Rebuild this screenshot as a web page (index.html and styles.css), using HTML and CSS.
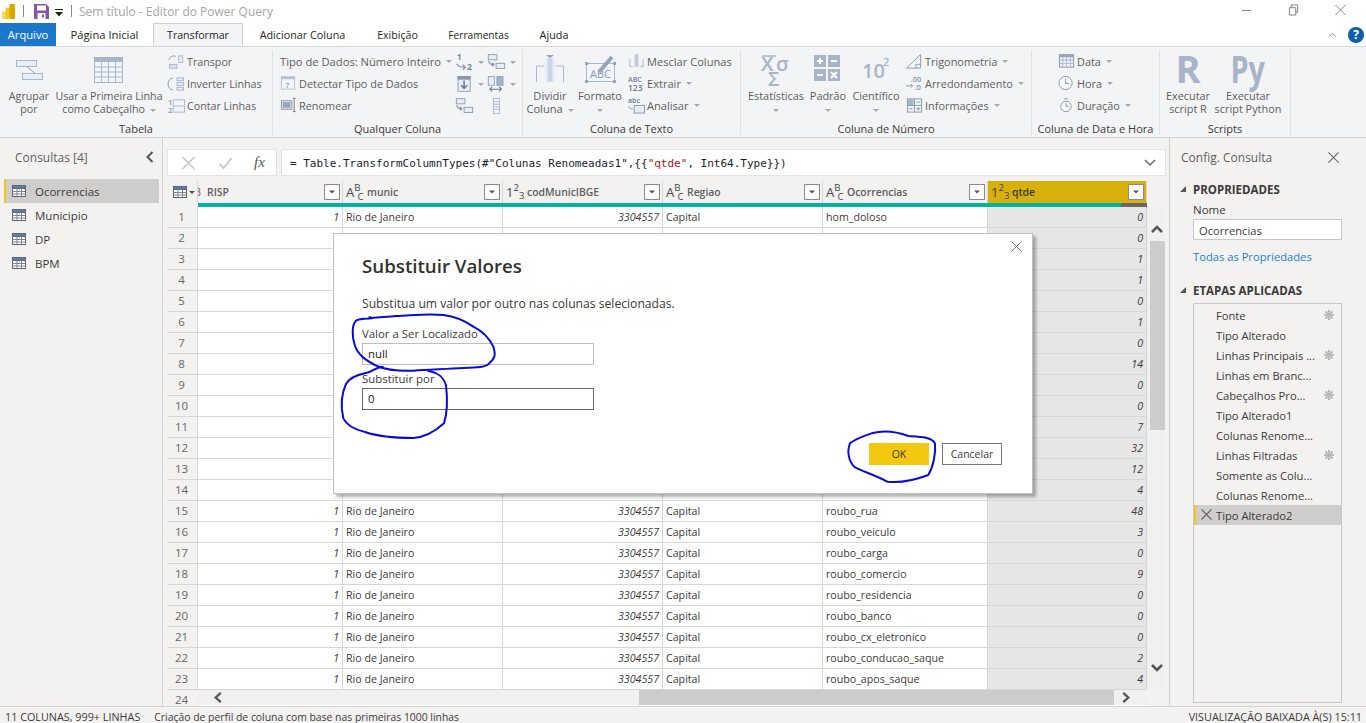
FILE: index.html
```html
<!DOCTYPE html>
<html lang="pt-BR">
<head>
<meta charset="utf-8">
<title>Sem título - Editor do Power Query</title>
<link rel="stylesheet" href="styles.css">
</head>
<body>
<svg class="defs" width="0" height="0" aria-hidden="true">
  <symbol id="tbl" viewBox="0 0 14 12"><rect x="0.5" y="0.5" width="13" height="11" fill="#fff" stroke="#5f6672"/><rect x="0.5" y="0.5" width="13" height="3" fill="#5b7fb0" stroke="#5f6672"/><path d="M5 3.5v8M9.500 3.500v8M.5 6.500h13M.5 9h13" stroke="#7d8590" fill="none"/></symbol>
  <symbol id="gear" viewBox="0 0 12 12"><path d="M6 1v2M6 9v2M1 6h2M9 6h2M2.500 2.500l1.500 1.500M8 8l1.500 1.500M9.500 2.500L8 4M4 8L2.500 9.500" stroke="#b5b5b5" stroke-width="2" fill="none"/><circle cx="6" cy="6" r="2.800" fill="#b5b5b5"/></symbol>
  <symbol id="filt" viewBox="0 0 16 16"><rect x="0.500" y="0.500" width="15" height="15" fill="#fff" stroke="#8a8a8a"/><path d="M5 6.500h6l-3 3z" fill="#555"/></symbol>
</svg>

<div class="app">
  <header class="titlebar">
    <svg class="logo" viewBox="0 0 16 18"><rect x="1" y="10" width="6" height="8" fill="#f6d860"/><rect x="5" y="6" width="5" height="12" fill="#f2c811"/><rect x="9" y="2" width="6" height="16" rx="1" fill="#d9a800"/></svg>
    <i class="tsep"></i>
    <svg class="save" viewBox="0 0 15 15"><path d="M0 0h12l3 3v12H0z" fill="#8a55a8"/><rect x="3" y="1.500" width="9" height="5" fill="#fff"/><rect x="3.500" y="9" width="8" height="6" fill="#fff"/><rect x="8" y="10.500" width="2" height="3" fill="#8a55a8"/></svg>
    <svg class="qat" viewBox="0 0 8 8"><rect y="0" width="8" height="1" fill="#222"/><path d="M0 3h8L4 7.500z" fill="#222"/></svg>
    <i class="tsep tsep2"></i>
    <span class="doc-title">Sem título - Editor do Power Query</span>
    <div class="winctl">
      <svg viewBox="0 0 12 12"><path d="M1 6.500h10" stroke="#777"/></svg>
      <svg viewBox="0 0 12 12"><path d="M1.500 3.500h7v8h-7zM3.500 3.500v-3h7v8h-2" fill="none" stroke="#777"/></svg>
      <svg viewBox="0 0 12 12"><path d="M.5.500l11 11M11.500.500l-11 11" stroke="#777" fill="none"/></svg>
    </div>
  </header>

  <nav class="tabs">
    <span class="tab file">Arquivo</span>
    <span class="tab t-pag">Página Inicial</span>
    <span class="tab on">Transformar</span>
    <span class="tab t-adi">Adicionar Coluna</span>
    <span class="tab t-exi">Exibição</span>
    <span class="tab t-fer">Ferramentas</span>
    <span class="tab t-aju">Ajuda</span>
    <div class="tabs-right">
      <svg class="collapse" viewBox="0 0 10 6"><path d="M1 5l4-4 4 4" fill="none" stroke="#888"/></svg>
      <span class="help">?</span>
    </div>
  </nav>

  <section class="ribbon">
    <div class="group g1">
      <div class="gbody">
        <div class="lg w-agr">
          <svg class="lgi" viewBox="0 0 32 30"><rect x="3.500" y="6.500" width="20" height="6" fill="#e8eef7" stroke="#a8b6d0"/><rect x="9.500" y="19.500" width="20" height="6" fill="#e8eef7" stroke="#a8b6d0"/><path d="M14 12.500l8 7" stroke="#999"/></svg>
          <span>Agrupar<br>por</span>
        </div>
        <div class="lg w-usar">
          <svg class="lgi" viewBox="0 0 32 30"><rect x="1.500" y="3.500" width="28" height="25" fill="#f2f5fa" stroke="#a8b6d0"/><rect x="1" y="3" width="29" height="5" fill="#a8b4c8"/><path d="M8.500 3v26M15.500 3v26M22.500 3v26M1.500 13h28M1.500 18h28M1.500 23h28" stroke="#a8b6d0" fill="none"/></svg>
          <span>Usar a Primeira Linha<br>como Cabeçalho <b class="dd"></b></span>
        </div>
        <div class="col c-trans">
          <div class="sm"><svg class="smi" viewBox="0 0 18 16"><path d="M1 6a5 5 0 0 1 7-4" fill="none" stroke="#8a96aa"/><rect x="11.500" y="1.500" width="4" height="7" fill="#e8eef7" stroke="#a8b6d0"/><rect x="1.500" y="10.500" width="8" height="4" fill="#d8e0ec" stroke="#a8b6d0"/></svg>Transpor</div>
          <div class="sm"><svg class="smi" viewBox="0 0 18 16"><path d="M5 2a5 6 0 0 0 0 12" fill="none" stroke="#8a96aa"/><rect x="9.500" y="1.500" width="7" height="3" fill="#e8eef7" stroke="#a8b6d0"/><rect x="9.500" y="6.500" width="7" height="3" fill="#e8eef7" stroke="#a8b6d0"/><rect x="9.500" y="11.500" width="7" height="3" fill="#e8eef7" stroke="#a8b6d0"/></svg>Inverter Linhas</div>
          <div class="sm"><svg class="smi" viewBox="0 0 18 16"><text x="0" y="7" class="svgt">1</text><text x="0" y="15" class="svgt">2</text><rect x="5.500" y="1.500" width="12" height="13" fill="#f2f5fa" stroke="#a8b6d0"/><path d="M5.500 8h12" stroke="#a8b6d0"/></svg>Contar Linhas</div>
        </div>
      </div>
      <div class="glabel">Tabela</div>
    </div>

    <div class="group g2">
      <div class="gbody">
        <div class="col c-any">
          <div class="sm first">Tipo de Dados: Número Inteiro <b class="dd"></b></div>
          <div class="sm"><svg class="smi" viewBox="0 0 18 16"><rect x="1.500" y="1.500" width="14" height="13" fill="#f2f5fa" stroke="#b5c0d4"/><rect x="1" y="1" width="15" height="3" fill="#b5c0d4"/><text x="6" y="13" class="svgt">?</text></svg>Detectar Tipo de Dados</div>
          <div class="sm"><svg class="smi" viewBox="0 0 18 16"><rect x="1.500" y="3.500" width="11" height="9" fill="#dfe5ef" stroke="#8a96aa"/><rect x="3" y="5" width="8" height="6" fill="#98a4b8"/><path d="M15 1v14M13.500 1h3M13.500 15h3" stroke="#777" fill="none"/></svg>Renomear</div>
        </div>
        <div class="icongrid">
          <div class="ig"><svg viewBox="0 0 22 20"><text x="2" y="8" class="svgt b">1</text><text x="14" y="19" class="svgt b">2</text><path d="M2 12c2 4 5 4 10 4M9 13l3 3-3 3" stroke="#8a96aa" stroke-width="1.500" fill="none"/></svg><b class="dd"></b></div>
          <div class="ig"><svg viewBox="0 0 22 20"><rect x="1.500" y="1.500" width="10" height="6" fill="#e8eef7" stroke="#8a96aa"/><rect x="10.500" y="11.500" width="10" height="6" fill="#e8eef7" stroke="#8a96aa"/><path d="M2 9c1 4 3 4 6 4M6 11l2 2-2 2" stroke="#8a96aa" fill="none" stroke-width="1.500"/></svg><b class="dd"></b></div>
          <div class="ig"><svg viewBox="0 0 22 20"><rect x="3.500" y="1.500" width="14" height="17" fill="#e8eef7" stroke="#8a96aa"/><rect x="3" y="1" width="15" height="4" fill="#8a96aa"/><path d="M10.500 6v9M7 11.500l3.500 3.500 3.500-3.500" stroke="#6d7b92" stroke-width="1.800" fill="none"/></svg><b class="dd"></b></div>
          <div class="ig"><svg viewBox="0 0 22 20"><rect x="1.500" y="1.500" width="7" height="10" fill="#e8eef7" stroke="#8a96aa"/><rect x="11.500" y="1.500" width="7" height="10" fill="#a8b4c8" stroke="#8a96aa"/><path d="M3 16h14M3 16l3-2.500M3 16l3 2.500M17 16l-3-2.500M17 16l-3 2.500" stroke="#6d7b92" stroke-width="1.200" fill="none"/></svg><b class="dd"></b></div>
          <div class="ig"><svg viewBox="0 0 22 20"><rect x="1.500" y="1.500" width="10" height="6" fill="#e8eef7" stroke="#8a96aa"/><rect x="10.500" y="11.500" width="10" height="6" fill="#e8eef7" stroke="#8a96aa"/><path d="M2 9c1 4 3 4 6 4M6 11l2 2-2 2" stroke="#8a96aa" fill="none" stroke-width="1.500"/></svg></div>
          <div class="ig"><svg viewBox="0 0 22 20"><rect x="7.500" y="1.500" width="7" height="17" fill="#f2f5fa" stroke="#a8b6d0"/><path d="M7.500 5h7M7.500 8h7M7.500 11h7M7.500 14h7" stroke="#a8b6d0"/></svg></div>
        </div>
      </div>
      <div class="glabel">Qualquer Coluna</div>
    </div>

    <div class="group g3">
      <div class="gbody">
        <div class="lg w-div">
          <svg class="lgi" viewBox="0 0 32 30"><path d="M2.500 28v-16h8M29.500 28v-16h-8" fill="none" stroke="#a8b6d0"/><rect x="11" y="4" width="10" height="24" fill="#e8eef7"/><rect x="13.500" y="4" width="5" height="24" fill="#cbd6e6"/><path d="M12 1h8l-4 3z" fill="#a0a0a0"/></svg>
          <span>Dividir<br>Coluna <b class="dd"></b></span>
        </div>
        <div class="lg w-for">
          <svg class="lgi" viewBox="0 0 32 30"><rect x="2.500" y="9.500" width="28" height="18" fill="#f2f5fa" stroke="#a8b6d0"/><rect x="1" y="8" width="3" height="3" fill="#98a4b8"/><rect x="29" y="8" width="3" height="3" fill="#98a4b8"/><rect x="1" y="26" width="3" height="3" fill="#98a4b8"/><rect x="29" y="26" width="3" height="3" fill="#98a4b8"/><text x="6" y="24" class="svgt abc">ABC</text><path d="M15 18L28 3" stroke="#98a4b8" stroke-width="4"/></svg>
          <span>Formato<br><b class="dd dd2"></b></span>
        </div>
        <div class="col c-text">
          <div class="sm"><svg class="smi" viewBox="0 0 18 16"><path d="M2 6v8h3M16 6v8h-3" fill="none" stroke="#a8b6d0"/><rect x="7" y="1" width="4" height="13" fill="#c3cad6"/></svg>Mesclar Colunas</div>
          <div class="sm"><svg class="smi tight" viewBox="0 0 18 18"><text x="0" y="8" class="svgt abc2">ABC</text><text x="0" y="17" class="svgt abc3">123</text></svg>Extrair <b class="dd"></b></div>
          <div class="sm"><svg class="smi tight" viewBox="0 0 18 18"><text x="0" y="7" class="svgt abc2">abc</text><rect x="6.500" y="9.500" width="11" height="8" fill="#e8eef7" stroke="#8a96aa"/><path d="M1 10c0 3 2 3 4 3" stroke="#8a96aa" fill="none"/></svg>Analisar <b class="dd"></b></div>
        </div>
      </div>
      <div class="glabel">Coluna de Texto</div>
    </div>

    <div class="group g4">
      <div class="gbody">
        <div class="lg w-est">
          <svg class="lgi" viewBox="0 0 32 30"><path d="M2 2h14" stroke="#a8b4c8" stroke-width="1.500"/><text x="1" y="17" class="svgt big">X</text><text x="16" y="17" class="svgt big">σ</text><text x="8" y="32" class="svgt big">Σ</text></svg>
          <span>Estatísticas<br><b class="dd dd2"></b></span>
        </div>
        <div class="lg w-pad">
          <svg class="lgi" viewBox="0 0 32 30"><rect x="2" y="1" width="12" height="12" fill="#a8b4c8"/><rect x="16" y="1" width="12" height="12" fill="#a8b4c8"/><rect x="2" y="15" width="12" height="12" fill="#a8b4c8"/><rect x="16" y="15" width="12" height="12" fill="#a8b4c8"/><path d="M5 7h6M8 4v6M19 7h6M5 21h6M19 18l6 6M25 18l-6 6" stroke="#fff" stroke-width="2"/></svg>
          <span>Padrão<br><b class="dd dd2"></b></span>
        </div>
        <div class="lg w-cie">
          <svg class="lgi" viewBox="0 0 32 30"><text x="2" y="24" class="svgt big2">10</text><text x="23" y="12" class="svgt mid">2</text></svg>
          <span>Científico<br><b class="dd dd2"></b></span>
        </div>
        <div class="col c-num">
          <div class="sm"><svg class="smi" viewBox="0 0 18 16"><path d="M.5 15.500L15.500 1v14.500z" fill="#f2f5fa" stroke="#8a96aa"/><path d="M10.500 15.500v-4h5" fill="none" stroke="#8a96aa"/></svg>Trigonometria <b class="dd"></b></div>
          <div class="sm"><svg class="smi" viewBox="0 0 18 16"><text x="5" y="7" class="svgt">.00</text><text x="9" y="15" class="svgt">.0</text><path d="M0 11h7M5 9l2 2-2 2" stroke="#8a96aa" fill="none"/></svg>Arredondamento <b class="dd"></b></div>
          <div class="sm"><svg class="smi" viewBox="0 0 18 16"><rect x="1.500" y="1.500" width="15" height="14" fill="#f2f5fa" stroke="#8a96aa"/><rect x="2" y="2" width="6" height="6" fill="#a8b4c8"/><path d="M9 1.500v14M1.500 8.500h15M11 5h4M11 12h4M13 10v4M3 12h4" stroke="#8a96aa"/></svg>Informações <b class="dd"></b></div>
        </div>
      </div>
      <div class="glabel">Coluna de Número</div>
    </div>

    <div class="group g5">
      <div class="gbody">
        <div class="col c-date">
          <div class="sm"><svg class="smi" viewBox="0 0 18 16"><rect x="1.500" y="1.500" width="15" height="13" fill="#f2f5fa" stroke="#8a96aa"/><rect x="1" y="1" width="16" height="3" fill="#98a4b8"/><path d="M5 4v10M9 4v10M13 4v10M2 7h14M2 10.500h14" stroke="#a8b6d0"/></svg>Data <b class="dd"></b></div>
          <div class="sm"><svg class="smi" viewBox="0 0 18 16"><circle cx="8" cy="8" r="7" fill="#f6f8fb" stroke="#8a96aa"/><path d="M8 3v5.500h3.500" fill="none" stroke="#8a96aa"/></svg>Hora <b class="dd"></b></div>
          <div class="sm"><svg class="smi" viewBox="0 0 18 16"><circle cx="8.500" cy="9.500" r="5.500" fill="#f6f8fb" stroke="#8a96aa"/><path d="M8.500 6v3.500h3M6.500 1.500h4" fill="none" stroke="#8a96aa"/></svg>Duração <b class="dd"></b></div>
        </div>
      </div>
      <div class="glabel">Coluna de Data e Hora</div>
    </div>

    <div class="group g6">
      <div class="gbody">
        <div class="lg w-r">
          <span class="biglet">R</span>
          <span>Executar<br>script R</span>
        </div>
        <div class="lg w-py">
          <span class="biglet py">Py</span>
          <span>Executar<br>script Python</span>
        </div>
      </div>
      <div class="glabel">Scripts</div>
    </div>
  </section>

  <main class="main">
    <aside class="queries">
      <div class="q-head"><span>Consultas [4]</span><svg class="q-chev" viewBox="0 0 8 12"><path d="M6.500 1l-5 5 5 5" fill="none" stroke="#555" stroke-width="2"/></svg></div>
      <div class="q-item on"><svg class="ti"><use href="#tbl"/></svg>Ocorrencias</div>
      <div class="q-item"><svg class="ti"><use href="#tbl"/></svg>Municipio</div>
      <div class="q-item"><svg class="ti"><use href="#tbl"/></svg>DP</div>
      <div class="q-item"><svg class="ti"><use href="#tbl"/></svg>BPM</div>
    </aside>

    <div class="center">
      <div class="fbar">
        <div class="fbtns">
          <svg viewBox="0 0 14 14"><path d="M1 1l12 12M13 1L1 13" stroke="#c8c8c8" stroke-width="1.600"/></svg>
          <svg viewBox="0 0 14 14"><path d="M1 8l4 4 8-10" fill="none" stroke="#c8c8c8" stroke-width="2"/></svg>
          <span class="fx">fx</span>
        </div>
        <div class="finput"><code>= Table.TransformColumnTypes(#"Colunas Renomeadas1",{{<span class="str">"qtde"</span>, Int64.Type}})</code>
          <svg class="fchev" viewBox="0 0 12 8"><path d="M1 1l5 5 5-5" fill="none" stroke="#666" stroke-width="1.500"/></svg>
        </div>
      </div>

      <div class="gridwrap">
        <div class="grid">
          <div class="row head">
            <div class="hc corner"><svg class="ti2"><use href="#tbl"/></svg><b class="dd dark"></b></div>
            <div class="hc"><span class="clip3">3</span><span class="hname">RISP</span><svg class="filt"><use href="#filt"/></svg></div>
            <div class="hc"><span class="ty ab">A<sup>B</sup><sub>C</sub></span><span class="hname">munic</span><svg class="filt"><use href="#filt"/></svg></div>
            <div class="hc"><span class="ty">1<sup>2</sup><sub>3</sub></span><span class="hname">codMunicIBGE</span><svg class="filt"><use href="#filt"/></svg></div>
            <div class="hc"><span class="ty ab">A<sup>B</sup><sub>C</sub></span><span class="hname">Regiao</span><svg class="filt"><use href="#filt"/></svg></div>
            <div class="hc"><span class="ty ab">A<sup>B</sup><sub>C</sub></span><span class="hname">Ocorrencias</span><svg class="filt"><use href="#filt"/></svg></div>
            <div class="hc sel"><span class="ty">1<sup>2</sup><sub>3</sub></span><span class="hname">qtde</span><svg class="filt"><use href="#filt"/></svg></div>
          </div>
          <div class="row quality">
            <i class="qc0"></i><i class="qc"></i><i class="qc"></i><i class="qc"></i><i class="qc"></i><i class="qc"></i><i class="qc last"><em></em></i>
          </div>
          <div class="row"><div class="n">1</div><div class="r">1</div><div>Rio de Janeiro</div><div class="r">3304557</div><div>Capital</div><div>hom_doloso</div><div class="r sel">0</div></div>
          <div class="row"><div class="n">2</div><div></div><div></div><div></div><div></div><div></div><div class="r sel">0</div></div>
          <div class="row"><div class="n">3</div><div></div><div></div><div></div><div></div><div></div><div class="r sel">1</div></div>
          <div class="row"><div class="n">4</div><div></div><div></div><div></div><div></div><div></div><div class="r sel">1</div></div>
          <div class="row"><div class="n">5</div><div></div><div></div><div></div><div></div><div></div><div class="r sel">0</div></div>
          <div class="row"><div class="n">6</div><div></div><div></div><div></div><div></div><div></div><div class="r sel">1</div></div>
          <div class="row"><div class="n">7</div><div></div><div></div><div></div><div></div><div></div><div class="r sel">0</div></div>
          <div class="row"><div class="n">8</div><div></div><div></div><div></div><div></div><div></div><div class="r sel">14</div></div>
          <div class="row"><div class="n">9</div><div></div><div></div><div></div><div></div><div></div><div class="r sel">0</div></div>
          <div class="row"><div class="n">10</div><div></div><div></div><div></div><div></div><div></div><div class="r sel">0</div></div>
          <div class="row"><div class="n">11</div><div></div><div></div><div></div><div></div><div></div><div class="r sel">7</div></div>
          <div class="row"><div class="n">12</div><div></div><div></div><div></div><div></div><div></div><div class="r sel">32</div></div>
          <div class="row"><div class="n">13</div><div></div><div></div><div></div><div></div><div></div><div class="r sel">12</div></div>
          <div class="row"><div class="n">14</div><div></div><div></div><div></div><div></div><div></div><div class="r sel">4</div></div>
          <div class="row"><div class="n">15</div><div class="r">1</div><div>Rio de Janeiro</div><div class="r">3304557</div><div>Capital</div><div>roubo_rua</div><div class="r sel">48</div></div>
          <div class="row"><div class="n">16</div><div class="r">1</div><div>Rio de Janeiro</div><div class="r">3304557</div><div>Capital</div><div>roubo_veiculo</div><div class="r sel">3</div></div>
          <div class="row"><div class="n">17</div><div class="r">1</div><div>Rio de Janeiro</div><div class="r">3304557</div><div>Capital</div><div>roubo_carga</div><div class="r sel">0</div></div>
          <div class="row"><div class="n">18</div><div class="r">1</div><div>Rio de Janeiro</div><div class="r">3304557</div><div>Capital</div><div>roubo_comercio</div><div class="r sel">9</div></div>
          <div class="row"><div class="n">19</div><div class="r">1</div><div>Rio de Janeiro</div><div class="r">3304557</div><div>Capital</div><div>roubo_residencia</div><div class="r sel">0</div></div>
          <div class="row"><div class="n">20</div><div class="r">1</div><div>Rio de Janeiro</div><div class="r">3304557</div><div>Capital</div><div>roubo_banco</div><div class="r sel">0</div></div>
          <div class="row"><div class="n">21</div><div class="r">1</div><div>Rio de Janeiro</div><div class="r">3304557</div><div>Capital</div><div>roubo_cx_eletronico</div><div class="r sel">0</div></div>
          <div class="row"><div class="n">22</div><div class="r">1</div><div>Rio de Janeiro</div><div class="r">3304557</div><div>Capital</div><div>roubo_conducao_saque</div><div class="r sel">2</div></div>
          <div class="row"><div class="n">23</div><div class="r">1</div><div>Rio de Janeiro</div><div class="r">3304557</div><div>Capital</div><div>roubo_apos_saque</div><div class="r sel">4</div></div>
          <div class="row"><div class="n">24</div></div>
          <div class="hscroll">
            <svg class="harrow" viewBox="0 0 10 12"><path d="M8 1L2.500 6 8 11" fill="none" stroke="#555" stroke-width="2.500"/></svg>
            <div class="hthumb"></div>
            <svg class="harrow right" viewBox="0 0 10 12"><path d="M2 1l5.500 5L2 11" fill="none" stroke="#555" stroke-width="2.500"/></svg>
          </div>
        </div>
        <div class="vscroll">
          <svg class="varrow" viewBox="0 0 12 10"><path d="M1 8l5-5 5 5" fill="none" stroke="#555" stroke-width="2.500"/></svg>
          <div class="vthumb"></div>
          <svg class="varrow down" viewBox="0 0 12 10"><path d="M1 2l5 5 5-5" fill="none" stroke="#555" stroke-width="2.500"/></svg>
        </div>
      </div>
    </div>

    <aside class="settings">
      <div class="s-head"><span>Config. Consulta</span><svg class="s-x" viewBox="0 0 12 12"><path d="M.5.500l11 11M11.500.500l-11 11" stroke="#666" stroke-width="1.200"/></svg></div>
      <div class="s-sec"><b class="tri"></b>PROPRIEDADES</div>
      <div class="s-label">Nome</div>
      <div class="s-input">Ocorrencias</div>
      <div class="s-link">Todas as Propriedades</div>
      <div class="s-sec s-sec2"><b class="tri"></b>ETAPAS APLICADAS</div>
      <div class="steps">
        <div class="step"><span>Fonte</span><svg class="gear"><use href="#gear"/></svg></div>
        <div class="step"><span>Tipo Alterado</span></div>
        <div class="step"><span>Linhas Principais ...</span><svg class="gear"><use href="#gear"/></svg></div>
        <div class="step"><span>Linhas em Branc...</span></div>
        <div class="step"><span>Cabeçalhos Pro...</span><svg class="gear"><use href="#gear"/></svg></div>
        <div class="step"><span>Tipo Alterado1</span></div>
        <div class="step"><span>Colunas Renome...</span></div>
        <div class="step"><span>Linhas Filtradas</span><svg class="gear"><use href="#gear"/></svg></div>
        <div class="step"><span>Somente as Colu...</span></div>
        <div class="step"><span>Colunas Renome...</span></div>
        <div class="step on"><svg class="step-x" viewBox="0 0 11 11"><path d="M.5.500l10 10M10.500.500l-10 10" stroke="#666" stroke-width="1.200"/></svg><span>Tipo Alterado2</span></div>
      </div>
    </aside>
  </main>

  <footer class="status">
    <span class="st1">11 COLUNAS, 999+ LINHAS</span>
    <span class="st2">Criação de perfil de coluna com base nas primeiras 1000 linhas</span>
    <span class="st3">VISUALIZAÇÃO BAIXADA À(S) 15:11</span>
  </footer>

  <div class="dialog">
    <svg class="d-x" viewBox="0 0 12 12"><path d="M.5.500l11 11M11.500.500l-11 11" stroke="#666"/></svg>
    <h2>Substituir Valores</h2>
    <p class="d-desc">Substitua um valor por outro nas colunas selecionadas.</p>
    <label class="d-lab">Valor a Ser Localizado</label>
    <div class="d-input">null</div>
    <label class="d-lab l2">Substituir por</label>
    <div class="d-input act">0</div>
    <div class="d-btns"><span class="btn ok">OK</span><span class="btn">Cancelar</span></div>
  </div>

  <svg class="ink" viewBox="0 0 1366 723">
    <g transform="translate(330 230) scale(.3333)" fill="none" stroke="#0a0ad8" stroke-width="6" stroke-linecap="round" stroke-linejoin="round">
      <path d="M118 262C150 268 90 262 78 272C65 285 66 320 74 345C85 378 110 392 140 408C170 420 200 424 250 422C300 420 350 416 400 414C440 413 470 412 478 400C495 385 498 375 490 350C478 325 460 305 430 290C405 272 380 260 340 255C290 250 250 256 200 258C170 260 140 262 118 265"/>
      <path d="M158 410C135 412 125 428 105 430C85 434 60 442 48 462C35 490 32 530 40 565C52 590 80 600 105 606C140 618 190 624 250 624C290 622 320 600 342 580C352 550 352 500 348 465C340 440 325 428 295 423"/>
    </g>
    <g transform="translate(800 420) scale(.3333)" fill="none" stroke="#0a0ad8" stroke-width="6" stroke-linecap="round" stroke-linejoin="round">
      <path d="M150 70C140 95 146 125 165 142C190 155 225 165 262 185C300 190 345 180 385 165C400 140 408 100 405 70C395 50 360 50 325 48C290 35 250 30 215 40C190 48 165 58 150 70Z"/>
    </g>
  </svg>
</div>
</body>
</html>
```
FILE: styles.css
```css
* { box-sizing: border-box; }
html, body { margin: 0; padding: 0; height: 100%; overflow: hidden; }
body { font-family: "Open Sans", "Noto Sans", sans-serif; font-size: 11.2px; color: #3b3a39; background: #f3f2f1; }
.defs { position: absolute; }
.app { position: relative; width: 1366px; height: 723px; display: flex; flex-direction: column; overflow: hidden; }

/* title bar */
.titlebar { height: 23px; background: #fff; display: flex; align-items: center; padding-left: 1px; flex: none; }
.logo { width: 15px; height: 17px; margin-top: -3px; }
.tsep { width: 1px; height: 12px; background: #888; margin-left: 7px; margin-top: -1px; }
.save { width: 15px; height: 15px; margin-left: 10px; margin-top: -1px; }
.qat { width: 8px; height: 8px; margin-left: 6px; margin-top: 2px; }
.tsep2 { margin-left: 8px; }
.doc-title { margin-left: 7px; font-size: 12px; color: #a6a6a6; margin-top: -1px; }
.winctl { margin-left: auto; display: flex; gap: 36px; padding-right: 20px; margin-top: -3px; }
.winctl svg { width: 11px; height: 12px; }

/* tabs */
.tabs { height: 23px; background: #fff; display: flex; align-items: stretch; flex: none; }
.tab { line-height: 24px; font-size: 10.800px; color: #252423; white-space: nowrap; text-align: center; flex: none; }
.tab.file { width: 56px; background: #1a77c9; color: #fff; font-size: 11.200px; }
.t-pag { width: 97px; font-size: 11.200px; }
.tab.on { width: 90px; background: #f3f4f6; border: 1px solid #d0d0d0; border-bottom: 0; line-height: 23px; font-size: 10.600px; }
.t-adi { width: 119px; }
.t-exi { width: 71px; font-size: 10.600px; }
.t-fer { width: 91px; font-size: 10.200px; }
.t-aju { width: 60px; }
.tabs-right { margin-left: auto; display: flex; align-items: center; padding-right: 2px; gap: 11px; }
.collapse { width: 9px; height: 6px; }
.help { width: 16px; height: 16px; border-radius: 50%; background: #0f5ea8; color: #fff; font-weight: 700; font-size: 12px; text-align: center; line-height: 16px; }

/* ribbon */
.ribbon { height: 92px; background: #f3f4f6; border-top: 1px solid #d9d9d9; border-bottom: 1px solid #d6d6d6; display: flex; flex: none; color: #605e5c; font-size: 10.900px; }
.group { display: flex; flex-direction: column; border-right: 1px solid #e0e1e3; margin-top: 3px; margin-bottom: 2px; flex: none; }
.g1 { width: 273px; font-size: 10.700px; }
.g2 { width: 250px; }
.g3 { width: 218px; font-size: 11.100px; }
.g4 { width: 291px; }
.g5 { width: 128px; }
.g6 { width: 131px; }
.gbody { flex: 1; display: flex; min-height: 0; }
.glabel { height: 14px; line-height: 16px; text-align: center; font-size: 11px; color: #3b3a39; }
.lg { display: flex; flex-direction: column; align-items: center; text-align: center; line-height: 13px; white-space: nowrap; flex: none; }
.lg > span:last-child { margin-top: 5px; }
.g1 .lg > span:last-child { margin-top: 6px; }
.lgi { width: 32px; height: 30px; margin-top: 4px; display: block; overflow: visible; }
.w-agr { width: 46px; margin-left: 6px; }
.w-usar { width: 108px; margin-left: 3px; }
.w-div { width: 38px; margin-left: 8px; }
.w-for { width: 44px; margin-left: 9px; }
.w-est { width: 62px; margin-left: 4px; }
.w-pad { width: 40px; margin-left: 1px; }
.w-cie { width: 50px; margin-left: 3px; }
.w-r { width: 50px; margin-left: 3px; }
.w-py { width: 70px; margin-left: 0; }
.biglet { font-family: "Open Sans", sans-serif; font-size: 38px; font-weight: 700; color: #a8b4c8; line-height: 36px; height: 37px; }
.biglet.py { transform: scaleX(.76); }
.lg > .biglet + span { margin-top: 2px; }
.col { display: flex; flex-direction: column; }
.sm { height: 22px; display: flex; align-items: center; white-space: nowrap; gap: 0; }
.sm .dd { margin-left: 5px; }
.sm.first { font-size: 11.200px; }
.smi { width: 17px; height: 16px; margin-right: 2px; flex: none; overflow: visible; }
.smi.tight { height: 18px; }
.c-trans { margin-left: 5px; padding-top: 1px; }
.c-any { margin-left: 7px; width: 175px; }
.c-text { margin-left: 6px; }
.c-num { margin-left: 5px; }
.c-date { margin-left: 26px; }
.icongrid { display: grid; grid-template-columns: 32px 32px; grid-auto-rows: 22px; padding-top: 1px; }
.ig { display: flex; align-items: center; }
.ig svg { width: 19px; height: 18px; margin-right: 2px; overflow: visible; }
.dd { display: inline-block; width: 0; height: 0; border-left: 3.500px solid transparent; border-right: 3.500px solid transparent; border-top: 3.500px solid #a8a8a8; vertical-align: middle; margin-left: 2px; }
.dd2 { margin: 0; }
.dd.dark { border-top-color: #555; }
.svgt { font-family: "Open Sans", sans-serif; font-size: 8px; fill: #8a96aa; font-weight: 600; }
.svgt.b { font-size: 10px; fill: #7a88a0; font-weight: 700; }
.svgt.abc { font-size: 11px; font-weight: 400; }
.svgt.abc2 { font-size: 7.500px; fill: #6d7b92; }
.svgt.abc3 { font-size: 9px; fill: #6d7b92; }
.svgt.big { font-size: 20px; fill: #a8b4c8; }
.svgt.big2 { font-size: 20px; fill: #a8b4c8; }
.svgt.mid { font-size: 11px; fill: #a8b4c8; }

/* main */
.main { flex: 1; min-height: 0; display: flex; background: #f3f2f1; }
.queries { width: 163px; border-right: 1px solid #d0d0d0; padding: 8px 3px 0 4px; flex: none; }
.q-head { height: 22px; margin-bottom: 11px; display: flex; align-items: center; padding-left: 11px; font-size: 12px; color: #605e5c; justify-content: space-between; padding-right: 5px; }
.q-chev { width: 8px; height: 12px; }
.q-item { height: 24px; display: flex; align-items: center; padding-left: 8px; font-size: 11.500px; color: #3b3a39; }
.q-item.on { background: #cfcecd; border-left: 2px solid #f2c811; padding-left: 6px; }
.ti { width: 14px; height: 12px; margin-right: 9px; flex: none; }
.center { width: 1007px; padding: 11px 0 0 4px; flex: none; display: flex; flex-direction: column; min-height: 0; }
.fbar { height: 27px; display: flex; gap: 4px; padding-right: 4px; flex: none; }
.fbtns { width: 110px; background: #fff; border: 1px solid #e3e3e3; display: flex; align-items: center; gap: 22px; padding-left: 13px; }
.fbtns svg { width: 15px; height: 14px; }
.fx { font-family: "Liberation Serif", serif; font-style: italic; font-size: 15px; color: #555; margin-left: -1px; }
.finput { flex: 1; background: #fff; border: 1px solid #e3e3e3; display: flex; align-items: center; padding: 1px 9px 0 8px; justify-content: space-between; }
code { font-family: "DejaVu Sans Mono", "Liberation Mono", monospace; font-size: 11px; color: #1b1b2e; white-space: pre; }
.str { color: #a31515; }
.fchev { width: 12px; height: 8px; }
.gridwrap { margin-top: 5px; flex: 1; min-height: 0; display: flex; }
.grid { width: 980px; position: relative; overflow: hidden; flex: none; background: #fff; }
.row { display: grid; grid-template-columns: 31px 145px 160px 160px 160px 165px 159px; height: 21px; border-bottom: 1px solid #d6d6d6; }
.row > div { border-right: 1px solid #d6d6d6; padding: 0 3px; line-height: 20px; font-size: 10.650px; color: #3b3a39; white-space: nowrap; overflow: hidden; }
.row > .n { background: #f3f2f1; color: #666; text-align: center; font-size: 11.500px; padding: 0 1px 0 0; border-right: 1px solid #d6d6d6; }
.row > .r { text-align: right; font-style: italic; padding-right: 3px; }
.row > .sel { background: #e6e6e6; }
.row.head { height: 22px; border: 0; background: #f3f2f1; }
.row.head > .hc { display: flex; align-items: center; padding: 0 2px 0 3px; background: #f3f2f1; border-right: 1px solid #d6d6d6; font-weight: 600; font-size: 10.400px; color: #605e5c; line-height: 22px; }
.row.head > .corner { padding-left: 6px; gap: 0; }
.row.head > .sel { background: #d8b00c; color: #3b3a39; }
.ti2 { width: 14px; height: 12px; flex: none; }
.clip3 { font-size: 11px; width: 3px; overflow: hidden; margin-left: -3px; direction: rtl; font-weight: 400; }
.hname { flex: 1; padding-left: 4px; }
.clip3 + .hname { padding-left: 6px; }
.ty { font-size: 13px; font-weight: 400; color: #444; display: inline-flex; align-items: center; width: 17px; flex: none; }
.ty sup, .ty sub { font-size: 9.500px; line-height: 1; vertical-align: baseline; position: relative; }
.ty sup { top: -4px; }
.ty sub { top: 4px; }
.ty.ab sub { margin-left: -3px; top: 5px; }
.filt { width: 16px; height: 16px; flex: none; }
.row.quality { height: 4px; border: 0; }
.quality i { display: block; background: #00b4a2; }
.quality .qc0 { background: #f3f2f1; }
.quality .last { position: relative; }
.quality .last em { position: absolute; right: 0; top: 0; bottom: 0; width: 26px; background: #6b6766; }
.row:not(.head):not(.quality) { background: #fff; }
.hscroll { position: absolute; left: 30px; right: 0; bottom: 1px; height: 15px; background: #f0f0f0; }
.hthumb { position: absolute; left: 442px; width: 475px; top: 0; bottom: 0; background: #cccccc; }
.harrow { position: absolute; left: 16px; top: 2px; width: 10px; height: 11px; }
.harrow.right { left: 924px; }
.vscroll { width: 18px; margin-top: 26px; background: #f0f0f0; padding: 0 0 0 3px; display: flex; flex-direction: column; height: 482px; flex: none; position: relative; }
.varrow { width: 12px; height: 10px; margin: 17px 0 0 1px; flex: none; }
.vthumb { width: 15px; height: 189px; background: #cccccc; margin-top: 7px; margin-left: 0; flex: none; }
.varrow.down { margin: auto 0 16px 1px; }

/* settings */
.settings { flex: 1; border-left: 1px solid #d0d0d0; padding: 0 24px 0 23px; min-width: 0; margin-left: -1px; position: relative; }
.s-head { height: 38px; display: flex; align-items: center; justify-content: space-between; margin-left: -12px; font-size: 12px; color: #605e5c; margin-right: 3px; }
.s-x { width: 11px; height: 11px; }
.s-sec { height: 24px; line-height: 28px; font-weight: 700; font-size: 11.500px; color: #3b3a39; position: relative; }
.tri { position: absolute; left: -13px; top: 10px; width: 0; height: 0; border-left: 3px solid transparent; border-right: 3px solid #555; border-bottom: 3px solid #555; border-top: 3px solid transparent; }
.s-label { height: 17px; line-height: 20px; font-size: 11.500px; color: #3b3a39; }
.s-input { height: 21px; margin-top: 2px; background: #fff; border: 1px solid #c8c8c8; padding-left: 5px; line-height: 21px; font-size: 11.200px; color: #3b3a39; }
.s-link { height: 26px; line-height: 34px; color: #1a7fd4; font-size: 11.200px; }
.s-sec2 { margin-top: 11px; }
.steps { margin-top: 2px; background: #f3f2f1; border: 1px solid #c8c8c8; height: 400px; padding-top: 1px; }
.step { height: 20px; display: flex; align-items: center; padding-left: 22px; padding-right: 6px; font-size: 11.200px; color: #3b3a39; justify-content: space-between; white-space: nowrap; position: relative; }
.step.on { background: #cfcecd; border-left: 2px solid #f2c811; padding-left: 20px; justify-content: flex-start; }
.step-x { width: 11px; height: 11px; position: absolute; left: 5px; top: 4px; }
.gear { width: 12px; height: 12px; flex: none; }

/* status */
.status { height: 17px; flex: none; border-top: 1px solid #d4d4d4; display: flex; padding: 4px 4px 0 5px; font-size: 10.800px; line-height: 12px; color: #3b3a39; white-space: nowrap; background: #f3f2f1; }
.st2 { margin-left: 14px; font-size: 10.400px; }
.st3 { margin-left: auto; }

/* dialog */
.dialog { position: absolute; left: 333px; top: 233px; width: 700px; height: 261px; background: #fff; border: 1px solid #bfbfbf; box-shadow: 3px 3px 3px rgba(0,0,0,.3); padding: 20px 28px; color: #3b3a39; }
.d-x { position: absolute; right: 10px; top: 7px; width: 11px; height: 11px; }
.dialog h2 { margin: 0; font-size: 18.700px; font-weight: 600; line-height: 24px; color: #323130; }
.d-desc { margin: 17px 0 0; font-size: 12.150px; line-height: 17px; height: 17px; }
.d-lab { display: block; margin-top: 14px; line-height: 15px; height: 15px; font-size: 11.400px; }
.d-lab.l2 { margin-top: 6px; }
.d-input { width: 232px; height: 22px; border: 1px solid #bdbdbd; padding-left: 5px; margin-top: 2px; font-size: 11.400px; line-height: 20px; color: #222; }
.d-input.act { border-color: #666; margin-top: 2px; }
.d-btns { position: absolute; right: 30px; bottom: 28px; display: flex; gap: 13px; }
.btn { width: 60px; height: 22px; border: 1px solid #777; text-align: center; line-height: 20px; font-size: 10.500px; background: #fff; }
.btn.ok { background: #f2c811; border-color: #f2c811; }

.ink { position: absolute; left: 0; top: 0; width: 1366px; height: 723px; pointer-events: none; }
```
